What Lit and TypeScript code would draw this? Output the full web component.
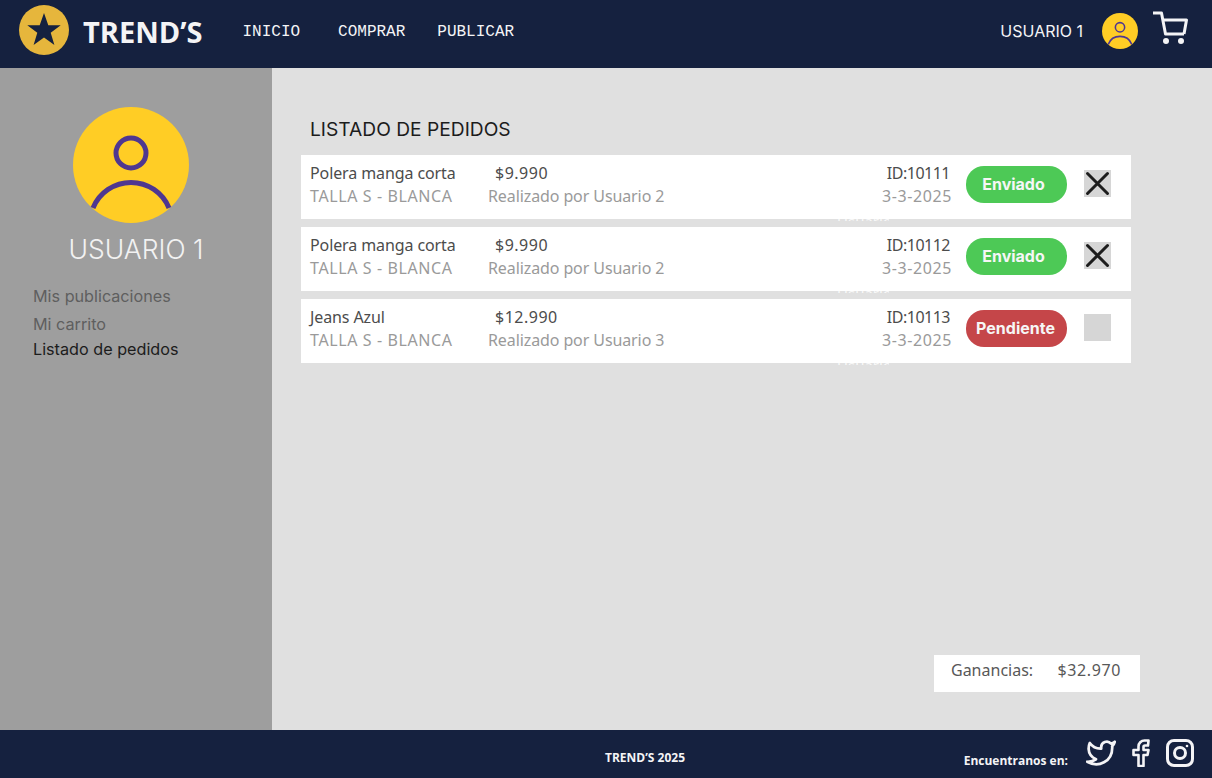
import { css, html, LitElement, svg } from "lit";
import { customElement } from "lit/decorators.js";

type Order = { name: string; price: string; buyer: string; id: string; status: string; done: boolean };

const orders: Order[] = [
    { name: "Polera manga corta", price: "$9.990", buyer: "Usuario 2", id: "10111", status: "Enviado", done: true },
    { name: "Polera manga corta", price: "$9.990", buyer: "Usuario 2", id: "10112", status: "Enviado", done: true },
    { name: "Jeans Azul", price: "$12.990", buyer: "Usuario 3", id: "10113", status: "Pendiente", done: false },
];

const avatar = (size: number) => html`
  <svg class="avatar" width=${size} height=${size} viewBox="0 0 116 116">
    <circle cx="58" cy="58" r="58" fill="#ffcd25" />
    <circle cx="58" cy="46" r="15" fill="none" stroke="#4f3790" stroke-width="5" />
    <path d="M20 101a41 41 0 0 1 76 0" fill="none" stroke="#4f3790" stroke-width="5" />
  </svg>
`;

@customElement("app-root")
export class AppRoot extends LitElement {
    render() {
        return html`
      <header class="top">
        <svg class="logo" width="50" height="50" viewBox="0 0 50 50">
          <circle cx="25" cy="25" r="25" fill="#e6b63c" />
          <path d="M25 8l4.3 12.2h12.4l-10 7.6 3.7 12.3L25 32.6l-10.4 7.5 3.7-12.3-10-7.6h12.4z" fill="#15213f" />
        </svg>
        <span class="brand">TREND’S</span>
        <nav class="nav">
          <a class="inicio">INICIO</a>
          <a class="comprar">COMPRAR</a>
          <a class="publicar">PUBLICAR</a>
        </nav>
        <span class="user">USUARIO 1</span>
        ${avatar(36)}
        <svg class="cart" width="36" height="36" viewBox="0 0 36 36" fill="none" stroke="#f4f4f6" stroke-width="3">
          <path d="M1 2h8.500l4 21H32" stroke-linejoin="round" />
          <path d="M10.500 9H34.500L32 23" stroke-linejoin="round" />
          ${svg`<circle cx="14" cy="30" r="3" fill="#f4f4f6" stroke="none" /><circle cx="29" cy="30" r="3" fill="#f4f4f6" stroke="none" />`}
        </svg>
      </header>
      <div class="body">
        <aside class="side">
          ${avatar(116)}
          <div class="side-name">USUARIO 1</div>
          <a class="link first">Mis publicaciones</a>
          <a class="link second">Mi carrito</a>
          <a class="link active">Listado de pedidos</a>
        </aside>
        <main class="main">
          <h1 class="title">LISTADO DE PEDIDOS</h1>
          <div class="rows">
            ${orders.map(o => this._row(o))}
          </div>
          <div class="total">
            <span>Ganancias:</span>
            <span class="money">$32.970</span>
          </div>
        </main>
      </div>
      <footer class="bottom">
        <span class="copy">TREND’S 2025</span>
        <div class="social">
          <span class="find">Encuentranos en:</span>
          <svg class="tw" width="30" height="28" viewBox="0 0 24 22" fill="none" stroke="#f4f4f6" stroke-width="2.2" stroke-linejoin="round">
            <path d="M23 2a10.900 10.900 0 0 1-3 1.500 4.480 4.480 0 0 0-7.860 3v1A10.660 10.660 0 0 1 3 3s-4 9 5 13a11.640 11.640 0 0 1-7 2c9 5 20 0 20-11.500a4.500 4.500 0 0 0-.08-.83A7.720 7.720 0 0 0 23 2z" />
          </svg>
          <svg class="fb" width="18" height="28" viewBox="0 0 18 28" fill="none" stroke="#f4f4f6" stroke-width="2.600" stroke-linejoin="round">
            <path d="M16.500 1.500h-4a6 6 0 0 0-6 6v3.500h-5v5h5v11h5V16h4l1-5h-5V8a1.500 1.500 0 0 1 1.500-1.500h3z" />
          </svg>
          <svg class="ig" width="28" height="28" viewBox="0 0 28 28" fill="none" stroke="#f4f4f6" stroke-width="3">
            <rect x="1.500" y="1.500" width="25" height="25" rx="6.500" />
            <circle cx="14" cy="14" r="5.500" />
            <circle cx="21" cy="7" r="1.300" fill="#f4f4f6" stroke="none" />
          </svg>
        </div>
      </footer>
    `;
    }

    _row(o: Order) {
        return html`
      <div class="row">
        <div class="cell product">
          <div class="strong name">${o.name}</div>
          <div class="soft size">TALLA S - BLANCA</div>
        </div>
        <div class="cell order">
          <div class="strong price">${o.price}</div>
          <div class="soft buyer">Realizado por ${o.buyer}</div>
        </div>
        <div class="cell meta">
          <div class="strong id">ID:${o.id}</div>
          <div class="soft date">3-3-2025</div>
        </div>
        <span class="pill ${o.done ? "sent" : "pending"}">${o.status}</span>
        <span class="check">
          ${o.done ? html`<svg width="27" height="27" viewBox="0 0 27 27" stroke="#1d1d1d" stroke-width="3" stroke-linecap="round"><path d="M3.500 3.500l20 20M23.500 3.500l-20 20" /></svg>` : ""}
        </span>
      </div>
    `;
    }

    static styles = css`
      :host {
        display: flex;
        flex-direction: column;
        width: 1212px;
        height: 778px;
        overflow: hidden;
        font-family: "Noto Sans", sans-serif;
      }

      .top {
        flex: none;
        display: flex;
        align-items: center;
        height: 68px;
        padding: 0 24px 8px 19px;
        box-sizing: border-box;
        background: #15213f;
        color: #f4f4f6;
      }

      .top svg {
        flex: none;
      }

      .brand {
        margin: 2px 0 0 14px;
        font: 700 29px "Open Sans", sans-serif;
      }

      .nav {
        display: flex;
        flex: 1;
        margin-left: 40px;
        margin-top: 4px;
        font: 16px "Liberation Mono", monospace;
      }

      .comprar {
        margin-left: 38px;
      }

      .publicar {
        margin-left: 32px;
      }

      .user {
        font: 16px Inter, sans-serif;
        margin-top: 2px;
      }

      .top .avatar {
        margin: 2px 14px 0 19px;
      }

      .cart {
        margin-top: -2px;
      }

      .body {
        flex: 1;
        display: flex;
        min-height: 0;
      }

      .side {
        flex: none;
        display: flex;
        flex-direction: column;
        width: 272px;
        padding-top: 39px;
        box-sizing: border-box;
        background: #9e9e9e;
      }

      .side .avatar {
        margin-left: 73px;
      }

      .side-name {
        margin-top: 10px;
        text-align: center;
        font: 300 26.5px Inter, sans-serif;
        color: #f2f2f2;
      }

      .link {
        margin-left: 33px;
        font: 16.2px Inter, sans-serif;
        line-height: 20px;
        color: #5f5f5f;
      }

      .first {
        margin-top: 21px;
      }

      .second {
        margin-top: 8px;
      }

      .active {
        margin-top: 5px;
        color: #1c1c1c;
      }

      .main {
        flex: 1;
        display: flex;
        flex-direction: column;
        padding: 49px 72px 38px 29px;
        box-sizing: border-box;
        background: #e0e0e0;
      }

      .title {
        margin: 0 0 14px 9px;
        font: 400 19.2px/24px Inter, sans-serif;
        color: #1c1c1c;
      }

      .rows {
        display: flex;
        flex-direction: column;
        gap: 8px;
        width: 830px;
      }

      .row {
        position: relative;
        display: flex;
        align-items: center;
        height: 64px;
        padding: 0 0 5px 9px;
        box-sizing: border-box;
        background: #fff;
      }

      /* tops of a clipped label peek out below each row in the mockup */
      .row::after {
        content: "Usuario";
        position: absolute;
        top: 64px;
        left: 536px;
        width: 52px;
        height: 2px;
        overflow: hidden;
        font: 15px/5px "Noto Sans", sans-serif;
        color: #fff;
        opacity: 0.8;
      }

      .cell {
        font-size: 16px;
        line-height: 23px;
      }

      .strong {
        color: #4c4c4c;
      }

      .soft {
        color: #9a9a9a;
      }

      .name {
        letter-spacing: -0.1px;
      }

      .size {
        letter-spacing: 0.6px;
      }

      .buyer {
        letter-spacing: -0.1px;
      }

      .product {
        width: 178px;
      }

      .price {
        margin-left: 7px;
        letter-spacing: 0.5px;
      }

      .order {
        width: 394px;
      }

      .meta {
        width: 70px;
        text-align: right;
        white-space: nowrap;
      }

      .id {
        margin-right: 2px;
        letter-spacing: -0.5px;
      }

      .date {
        letter-spacing: 0.6px;
      }

      .pill {
        flex: none;
        width: 101px;
        height: 37px;
        margin-left: 14px;
        margin-bottom: 1px;
        box-sizing: border-box;
        border-radius: 18px;
        text-align: center;
        font: 700 16px/36px Inter, sans-serif;
        color: #f6f6f6;
      }

      .sent {
        padding-right: 6px;
        background: #4dc956;
      }

      .pending {
        padding-right: 2px;
        background: #c54649;
      }

      .check {
        flex: none;
        width: 27px;
        height: 27px;
        margin-left: 17px;
        margin-bottom: 2px;
        background: #d6d6d6;
      }

      .check svg {
        display: block;
      }

      .total {
        display: flex;
        justify-content: space-between;
        align-self: flex-end;
        width: 206px;
        height: 37px;
        margin-top: auto;
        padding: 3px 19px 0 17px;
        box-sizing: border-box;
        background: #fff;
        font-size: 16px;
        line-height: 24px;
        color: #585858;
      }

      .money {
        letter-spacing: 0.6px;
      }

      .bottom {
        flex: none;
        display: flex;
        align-items: center;
        height: 48px;
        padding: 0 18px 0 605px;
        box-sizing: border-box;
        background: #15213f;
        font: 700 12px "Open Sans", sans-serif;
        color: #f4f4f6;
      }

      .copy {
        flex: 1;
        margin-top: 6px;
      }

      .social {
        display: flex;
        align-items: center;
        margin-top: -2px;
      }

      .find {
        margin: 14px 18px 0 0;
      }

      .fb {
        margin-left: 16px;
      }

      .ig {
        margin-left: 16px;
      }
    `;
}
